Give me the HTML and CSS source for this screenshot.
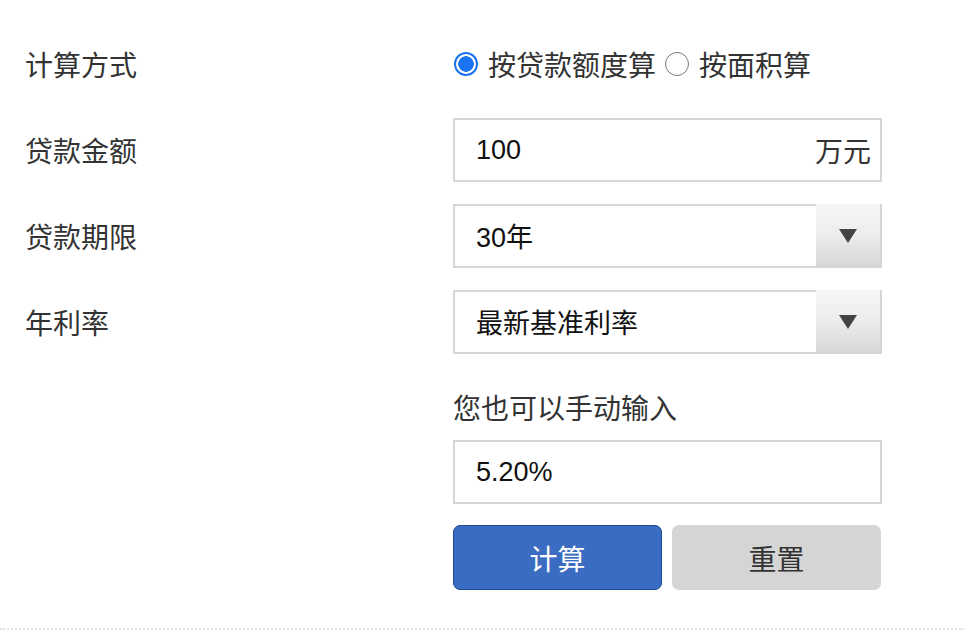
FILE: index.html
```html
<!DOCTYPE html>
<html lang="zh-CN">
<head>
<meta charset="utf-8">
<title>房贷计算器</title>
<link rel="stylesheet" href="styles.css">
</head>
<body>
<form class="calc">
  <div class="row row-method">
    <div class="label">计算方式</div>
    <div class="field radios">
      <label class="radio"><span class="dot checked"></span><span class="rtext">按贷款额度算</span></label>
      <label class="radio"><span class="dot"></span><span class="rtext">按面积算</span></label>
    </div>
  </div>
  <div class="row row-box">
    <div class="label">贷款金额</div>
    <div class="field box input">
      <span class="value">100</span>
      <span class="unit">万元</span>
    </div>
  </div>
  <div class="row row-box gap">
    <div class="label">贷款期限</div>
    <div class="field box select">
      <span class="value">30年</span>
      <span class="arrow"><span class="tri"></span></span>
    </div>
  </div>
  <div class="row row-box gap">
    <div class="label">年利率</div>
    <div class="field box select">
      <span class="value">最新基准利率</span>
      <span class="arrow"><span class="tri"></span></span>
    </div>
  </div>
  <div class="row row-hint">
    <div class="label"></div>
    <div class="field hint">您也可以手动输入</div>
  </div>
  <div class="row row-rate">
    <div class="label"></div>
    <div class="field box input">
      <span class="value">5.20%</span>
    </div>
  </div>
  <div class="row row-buttons">
    <div class="label"></div>
    <div class="field buttons">
      <button type="button" class="btn btn-primary">计算</button>
      <button type="button" class="btn btn-reset">重置</button>
    </div>
  </div>
  <div class="divider"></div>
</form>
</body>
</html>
```
FILE: styles.css
```css
html, body {
  margin: 0;
  padding: 0;
  background: #ffffff;
}

body {
  font-family: "Noto Sans CJK SC", "Liberation Sans", sans-serif;
  font-size: 28px;
  color: #333333;
  width: 964px;
  height: 632px;
  overflow: hidden;
}

.calc {
  display: flex;
  flex-direction: column;
}

.row {
  display: flex;
  align-items: center;
  padding-left: 25px;
}

.label {
  width: 428px;
  flex: none;
  line-height: 36px;
  color: #333333;
}

.field {
  width: 429px;
  flex: none;
  box-sizing: border-box;
}

.row-method {
  margin-top: 40px;
  height: 48px;
}

.radios {
  display: flex;
  align-items: center;
}

.radio {
  display: flex;
  align-items: center;
  cursor: pointer;
}

.dot {
  width: 24px;
  height: 24px;
  box-sizing: border-box;
  border-radius: 50%;
  border: 1.5px solid #7a7a7a;
  background: #ffffff;
  margin-left: 1px;
  margin-right: 10px;
  flex: none;
}

.dot.checked {
  border: 2px solid #1a73f0;
  background: radial-gradient(circle, #1a73f0 0 7.5px, #ffffff 8px);
}

.radio + .radio .dot {
  margin-left: 9px;
  margin-right: 10px;
}

.rtext {
  line-height: 36px;
}

.row-box {
  margin-top: 30px;
}

.row-box.gap {
  margin-top: 22px;
}

.box {
  height: 64px;
  border: 2px solid #d6d6d6;
  display: flex;
  align-items: center;
  background: #ffffff;
}

.value {
  font-family: "Liberation Sans", "Noto Sans CJK SC", sans-serif;
  color: #111111;
  padding-left: 21px;
  flex: 1;
  font-size: 27px;
}

.unit {
  padding-right: 9px;
  color: #333333;
}

.select {
  align-items: stretch;
}

.select .value {
  display: flex;
  align-items: center;
  padding-bottom: 2px;
}

.arrow {
  width: 64px;
  flex: none;
  background: linear-gradient(to bottom, #f5f6f8 0%, #eceef0 45%, #d6d7d8 100%);
  display: flex;
  align-items: center;
  justify-content: center;
  margin-top: -2px;
}

.tri {
  width: 0;
  height: 0;
  border-left: 9px solid transparent;
  border-right: 9px solid transparent;
  border-top: 14px solid #444444;
  margin-top: 2px;
}

.row-hint {
  margin-top: 35px;
}

.hint {
  line-height: 36px;
  color: #333333;
}

.row-rate {
  margin-top: 15px;
}

.row-buttons {
  margin-top: 21px;
}

.buttons {
  display: flex;
  gap: 10px;
}

.btn {
  flex: none;
  width: 209px;
  box-sizing: border-box;
  height: 65px;
  border-radius: 7px;
  font-family: "Noto Sans CJK SC", sans-serif;
  font-size: 28px;
  cursor: pointer;
  padding: 0;
}

.btn-primary {
  background: #3a6cc1;
  border: 1.5px solid #1c4a93;
  color: #ffffff;
}

.btn-reset {
  background: #d5d5d5;
  border: none;
  color: #333333;
}

.divider {
  margin-top: 38px;
  height: 0;
  border-top: 2px dotted #e2e2e6;
}
```
